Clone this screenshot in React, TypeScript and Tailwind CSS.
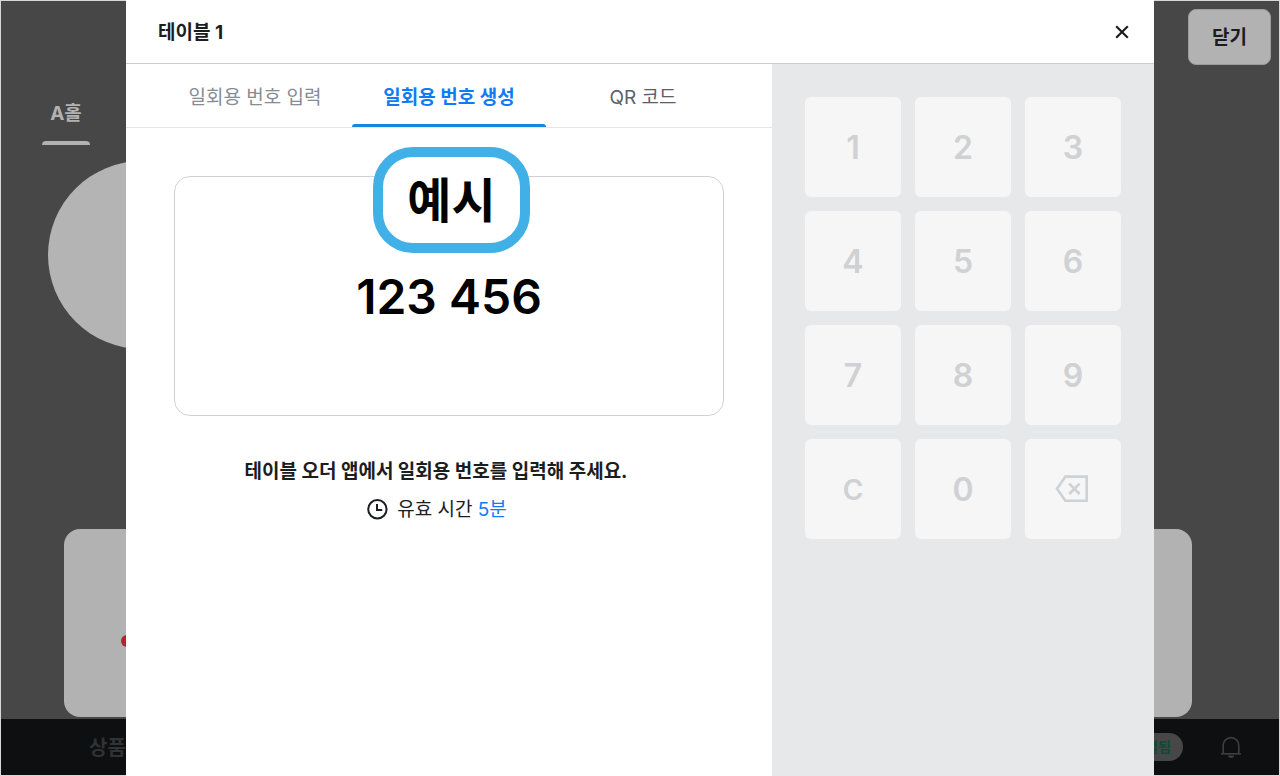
import { useState } from "react";
import clsx from "clsx";

const tabs = [
  { id: "enter", label: "일회용 번호 입력", idle: "text-[#878b94]" },
  { id: "create", label: "일회용 번호 생성", idle: "text-[#878b94]" },
  { id: "qr", label: "QR 코드", idle: "text-[#5d6068]" },
];

const keys = ["1", "2", "3", "4", "5", "6", "7", "8", "9", "C", "0", "back"];

function CloseIcon() {
  return (
    <svg className="w-4 h-4" viewBox="0 0 16 16" fill="none" stroke="currentColor" strokeWidth="2.2">
      <path d="M2.2 2.2l11.6 11.6M13.8 2.2L2.2 13.8" />
    </svg>
  );
}

function ClockIcon() {
  return (
    <svg className="w-6 h-6" viewBox="0 0 24 24" fill="none" stroke="currentColor" strokeWidth="2">
      <circle cx="12.4" cy="11.2" r="9.2" />
      <path d="M12 6v6h5.2" />
    </svg>
  );
}

function BackspaceIcon() {
  return (
    <svg className="w-9 h-9" viewBox="0 0 36 36" fill="none" stroke="currentColor" strokeWidth="2.6">
      <path d="M10.4 5.6h21.3v24.2H10.4L2 17.7z" />
      <path d="M14.2 12.6l10.4 10.4M24.6 12.6L14.2 23" />
    </svg>
  );
}

function BellIcon() {
  return (
    <svg className="w-6 h-6" viewBox="0 0 24 24" fill="none" stroke="currentColor" strokeWidth="1.6">
      <path d="M4.2 18.6V10.4a7.8 7.8 0 0 1 15.6 0v8.2" />
      <path d="M2 18.8h20" />
      <path d="M9 20.5a3 2.4 0 0 0 6 0z" fill="currentColor" stroke="none" />
    </svg>
  );
}

// Dimmed order screen behind the dialog
function HallScreen() {
  return (
    <div className="min-h-screen flex flex-col border border-[#d5dad7] bg-[#474747]">
      <div className="flex justify-end px-2 pt-2">
        <button className="h-14 px-[23px] pt-0.5 rounded-lg border border-[#9c9c9c] bg-[#b2b2b2] text-[19px] font-bold text-[#1c1c1e]">
          닫기
        </button>
      </div>
      <div className="flex px-[41px] pt-8">
        <button className="w-12 h-12 flex flex-col items-center justify-between text-[19px] leading-[34px] font-bold text-[#b2b2b2]">
          A홀
          <span className="w-12 h-1 rounded-t bg-[#b2b2b2]" />
        </button>
      </div>
      <div className="flex-1 flex flex-col justify-between pt-4">
        <div className="ml-[47px] w-[188px] h-[188px] rounded-full bg-[#b4b4b4]" />
        <div className="ml-[63px] mr-[87px] mb-0.5 h-[188px] pl-[57px] pt-9 flex items-center rounded-2xl bg-[#b2b2b2]">
          <span className="w-3 h-3 rounded-full bg-[#b2232f]" />
        </div>
      </div>
      <div className="h-14 flex items-center justify-between pl-[88px] pr-9 bg-[#0d0f10]">
        <span className="pt-0.5 text-xl font-bold text-[#303234]">상품</span>
        <div className="flex items-center gap-9 text-[#3c3e40]">
          <span className="h-7 px-3 flex items-center rounded-full bg-[#474747] text-sm font-bold text-[#0e4a35]">
            연결됨
          </span>
          <BellIcon />
        </div>
      </div>
    </div>
  );
}

export default function App() {
  const [activeTab, setActiveTab] = useState("create");

  return (
    <div className="relative font-['Inter','Noto_Sans_CJK_KR',sans-serif]">
      <HallScreen />

      <div className="absolute inset-0 flex justify-center">
        <div
          role="dialog"
          aria-label="테이블 1"
          className="w-full max-w-[1028px] flex flex-col bg-white text-[#1b1d21]"
        >
          {/* Header */}
          <div className="h-16 shrink-0 pl-8 pr-6 flex items-center justify-between border-b border-[#c9cbcd]">
            <h1 className="pt-1 text-[19px] font-bold">테이블 1</h1>
            <button aria-label="닫기">
              <CloseIcon />
            </button>
          </div>

          <div className="flex-1 flex">
            <div className="flex-1">
              <div role="tablist" className="h-16 px-8 grid grid-cols-3 border-b border-[#e3e5e7]">
                {tabs.map((tab) => (
                  <button
                    key={tab.id}
                    role="tab"
                    aria-selected={activeTab === tab.id}
                    onClick={() => setActiveTab(tab.id)}
                    className={clsx(
                      "relative pt-1.5 text-[19px]",
                      activeTab === tab.id ? "font-bold text-[#0f7cf5]" : tab.idle
                    )}
                  >
                    {tab.label}
                    {activeTab === tab.id && (
                      <span className="absolute inset-x-0 bottom-0 h-[3px] rounded-t bg-[#1687e0]" />
                    )}
                  </button>
                ))}
              </div>

              <div className="px-12 pt-12">
                <div className="relative h-60 flex items-center justify-center rounded-2xl border border-[#cfd1d4]">
                  <span className="pt-0.5 text-5xl font-semibold text-black">123 456</span>
                  <span className="absolute -top-[30px] left-[198px] w-[157px] h-[106px] pt-0.5 flex items-center justify-center rounded-[40px] border-10 border-[#41b0e6] bg-white text-5xl font-bold text-black">
                    예시
                  </span>
                </div>
                <div className="pt-10 pr-[26px] flex flex-col items-center gap-1.5 text-[19px] leading-8">
                  <p className="font-bold">테이블 오더 앱에서 일회용 번호를 입력해 주세요.</p>
                  <p className="flex items-center gap-2">
                    <ClockIcon />
                    <span>
                      유효 시간 <span className="text-[#0f7cf5]">5분</span>
                    </span>
                  </p>
                </div>
              </div>
            </div>

            {/* Keypad */}
            <div className="w-[382px] p-[33px] bg-[#e6e8e9]">
              <div className="grid grid-cols-3 gap-[14px]">
                {keys.map((key) => (
                  <button
                    key={key}
                    aria-label={key === "back" ? "지우기" : key}
                    className={clsx(
                      "h-[100px] flex items-center justify-center rounded-md bg-[#f6f6f6] font-semibold text-[#cfd1d3]",
                      key !== "back" && "pt-0.5",
                      key === "C" ? "text-[28px]" : "text-[32px]"
                    )}
                  >
                    {key === "back" ? <BackspaceIcon /> : key}
                  </button>
                ))}
              </div>
            </div>
          </div>
        </div>
      </div>
    </div>
  );
}
